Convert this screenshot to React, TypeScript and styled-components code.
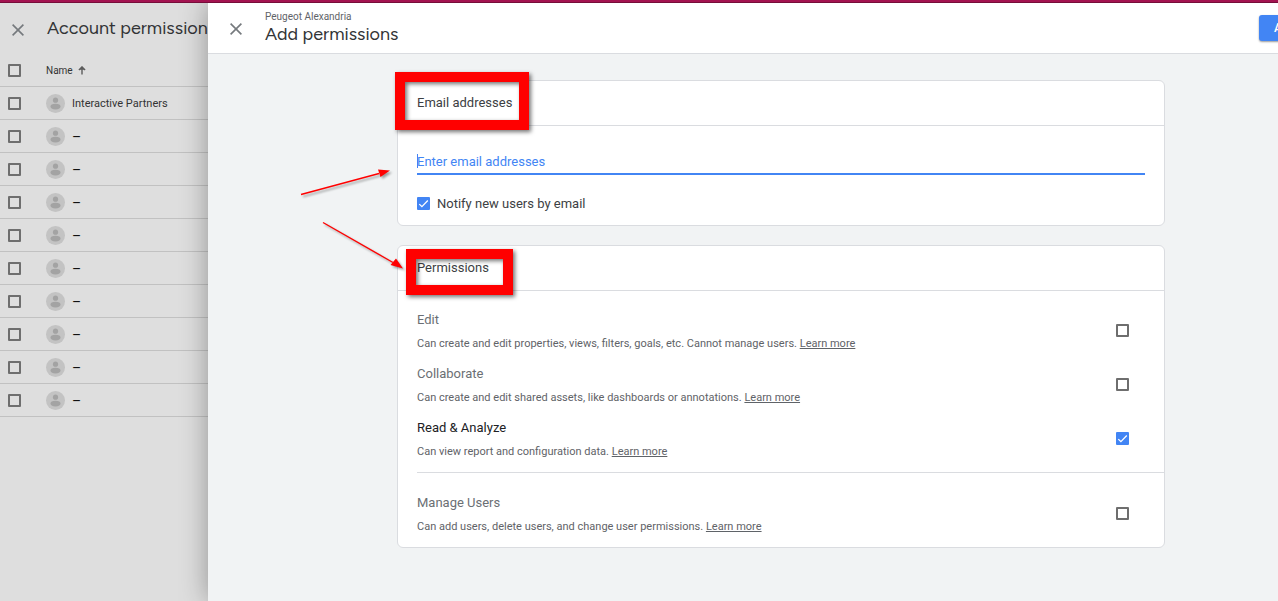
import React, { useId, useState } from "react";
import styled, { createGlobalStyle } from "styled-components";

const GlobalStyle = createGlobalStyle`
  *, *::before, *::after { box-sizing: border-box; }
  body {
    margin: 0;
    font-family: Roboto, "Liberation Sans", sans-serif;
    font-size: 13px;
    color: #3c4043;
    background: #dedede;
  }
  button, input { font: inherit; }
`;

const Page = styled.div`
  display: flex;
  flex-direction: column;
  min-height: 100vh;
  overflow: hidden;
`;

const BrandBar = styled.div`
  height: 3px;
  flex: none;
  background: #a31350;
  border-bottom: 1px solid #760d3a;
`;

const Columns = styled.div`
  display: flex;
  flex: 1;
`;

const Sidebar = styled.aside`
  flex: 0 0 208px;
  overflow: hidden;
  background: #dedede;
`;

const SidebarHeader = styled.header`
  display: flex;
  align-items: center;
  gap: 23px;
  height: 51px;
  padding-left: 12px;
`;

const Title = styled.h1`
  margin: 0;
  padding-bottom: 2px;
  font-family: Figtree, Lato, sans-serif;
  font-size: 18px;
  font-weight: 400;
  line-height: 20px;
  white-space: nowrap;
  color: #323436;
`;

const IconButton = styled.button`
  display: flex;
  flex: none;
  padding: 2px 0 0;
  border: 0;
  background: none;
  color: #75797d;
  cursor: pointer;
`;

const UserTable = styled.table`
  width: 100%;
  table-layout: fixed;
  border-collapse: separate;
  border-spacing: 0;

  th, td {
    height: 33px;
    padding: 0;
    border-bottom: 1px solid #c1c1c1;
    text-align: left;
    font-weight: 400;
  }
`;

const TickHead = styled.th`
  width: 46px;
`;

const TickPad = styled.div`
  padding-left: 8px;
`;

const SortButton = styled.button`
  display: flex;
  align-items: center;
  gap: 5px;
  padding: 1px 0 0;
  border: 0;
  background: none;
  font-size: 10px;
  line-height: 16px;
  color: #333;
  cursor: pointer;
`;

const UserCell = styled.div`
  display: flex;
  align-items: center;
  gap: 7px;
  font-size: 11px;
  line-height: 18px;
  white-space: nowrap;
  color: #333;
`;

const UserName = styled.span<{ $blank: boolean }>`
  padding-top: 1px;
  font-size: ${(p) => (p.$blank ? 14 : 11)}px;
  color: ${(p) => (p.$blank ? "#111" : "#333")};
`;

const Panel = styled.section`
  position: relative;
  display: flex;
  flex: 1;
  flex-direction: column;
  min-width: 0;
  background: #f1f3f4;
  box-shadow: 0 0 26px rgba(0, 0, 0, 0.34);
  clip-path: inset(0 0 0 -30px);
`;

const PanelHeader = styled.header`
  display: grid;
  grid-template-columns: 12px 1fr 19px;
  column-gap: 23px;
  align-items: center;
  height: 51px;
  padding-left: 22px;
  border-bottom: 1px solid #dadce0;
  background: #fff;
`;

const Heading = styled.div`
  display: flex;
  flex-direction: column;
`;

const AccountName = styled.p`
  margin: 0;
  font-size: 10px;
  line-height: 14px;
  color: #5f6368;
`;

const AddButton = styled.button`
  width: 60px;
  height: 26px;
  padding: 0 15px;
  border: 0;
  border-radius: 3px;
  background: #4285f4;
  box-shadow: 0 1px 2px rgba(0, 0, 0, 0.4);
  color: #fff;
  font-size: 12px;
  font-weight: 500;
  text-align: left;
  cursor: pointer;
`;

const PanelBody = styled.main`
  position: relative;
  display: flex;
  flex: 1;
  flex-direction: column;
  gap: 19px;
  padding: 26px 113px 26px 189px;
`;

const Card = styled.section`
  position: relative;
  border: 1px solid #dadce0;
  border-radius: 6px;
  background: #fff;
`;

const CardTitle = styled.h2`
  margin: 0;
  padding: 12px 19px;
  border-bottom: 1px solid #dadce0;
  font-size: 13px;
  font-weight: 400;
  line-height: 20px;
  color: #3c4043;
`;

const EmailBody = styled.div`
  display: flex;
  flex-direction: column;
  gap: 18px;
  padding: 24px 19px 11px;
`;

const EmailField = styled.div`
  display: flex;
  align-items: center;
  padding-bottom: 1px;
  border-bottom: 2px solid #4285f4;

  &::before {
    content: "";
    width: 1px;
    height: 14px;
    margin-right: -1px;
    background: #4285f4;
  }
`;

const EmailInput = styled.input`
  flex: 1;
  min-width: 0;
  height: 22px;
  padding: 0;
  border: 0;
  outline: 0;
  background: none;
  color: #3c4043;

  &::placeholder {
    color: #4285f4;
    opacity: 1;
  }
`;

const NotifyRow = styled.div`
  display: flex;
  align-items: center;
  gap: 7px;
  line-height: 21px;
`;

const TickFrame = styled.span`
  display: grid;
  flex: none;
  width: 13px;
  height: 13px;
`;

const TickInput = styled.input`
  grid-area: 1 / 1;
  width: 13px;
  height: 13px;
  margin: 0;
  appearance: none;
  border: 2px solid #6e6e6e;
  border-radius: 1px;
  cursor: pointer;

  &:checked {
    border: 0;
    background: #4285f4;
  }
`;

const TickMark = styled.svg`
  grid-area: 1 / 1;
  pointer-events: none;
`;

const PermissionList = styled.div`
  padding: 12px 0 7px;
`;

const PermissionRow = styled.div`
  display: flex;
  align-items: center;
  justify-content: space-between;
  min-height: 54px;
  padding: 0 35px 0 19px;
`;

const PermissionText = styled.div`
  padding-top: 4px;
`;

const Separator = styled.hr`
  margin: 7px 0 13px 19px;
  border: 0;
  border-top: 1px solid #dadce0;
`;

const PermissionName = styled.label<{ $on: boolean }>`
  display: block;
  line-height: 24px;
  color: ${(p) => (p.$on ? "#202124" : "#6b6f74")};
`;

const PermissionNote = styled.p`
  margin: 0;
  font-size: 11px;
  line-height: 24px;
  color: #5f6368;
`;

const LearnMore = styled.a`
  color: inherit;
  text-underline-offset: 1px;
`;

const Highlight = styled.div<{ $top: number; $left: number; $width: number; $height: number }>`
  position: absolute;
  top: ${(p) => p.$top}px;
  left: ${(p) => p.$left}px;
  width: ${(p) => p.$width}px;
  height: ${(p) => p.$height}px;
  border: 10px solid #f00;
  filter: drop-shadow(2px 2px 2px rgba(0, 0, 0, 0.55));
  pointer-events: none;
`;

const Arrows = styled.svg`
  position: absolute;
  top: 0;
  left: 0;
  overflow: visible;
  filter: drop-shadow(2px 2px 1px rgba(0, 0, 0, 0.35));
  pointer-events: none;
`;

function CloseIcon() {
  return (
    <svg width="12" height="12" viewBox="0 0 12 12" fill="none" stroke="currentColor" strokeWidth="1.6">
      <path d="M0.6 0.6 11.4 11.4M11.4 0.6 0.6 11.4" />
    </svg>
  );
}

function Avatar() {
  return (
    <svg width="19" height="19" viewBox="0 0 19 19">
      <circle cx="9.5" cy="9.5" r="9.5" fill="#c3c3c3" />
      <circle cx="9.5" cy="6.2" r="2.6" fill="#a3a3a3" />
      <ellipse cx="9.5" cy="12.6" rx="5" ry="2.8" fill="#a3a3a3" />
    </svg>
  );
}

type TickProps = { checked?: boolean; onToggle?: () => void; id?: string; label?: string };

function Tick({ checked = false, onToggle = () => {}, id, label }: TickProps) {
  return (
    <TickFrame>
      <TickInput type="checkbox" id={id} aria-label={label} checked={checked} onChange={onToggle} />
      {checked && (
        <TickMark width="13" height="13" viewBox="0 0 13 13" fill="none" stroke="#fff" strokeWidth="1.3">
          <path d="M2.3 7.1 4.9 9.6 10.8 3.5" />
        </TickMark>
      )}
    </TickFrame>
  );
}

const users = ["Interactive Partners", "–", "–", "–", "–", "–", "–", "–", "–", "–"];

const permissions = [
  { name: "Edit", note: "Can create and edit properties, views, filters, goals, etc. Cannot manage users." },
  { name: "Collaborate", note: "Can create and edit shared assets, like dashboards or annotations." },
  { name: "Read & Analyze", note: "Can view report and configuration data." },
  { name: "Manage Users", note: "Can add users, delete users, and change user permissions." },
];

function Permission({ name, note, initial }: { name: string; note: string; initial: boolean }) {
  const id = useId();
  const [on, setOn] = useState(initial);
  return (
    <PermissionRow>
      <PermissionText>
        <PermissionName htmlFor={id} $on={on}>{name}</PermissionName>
        <PermissionNote>
          {note} <LearnMore href="#">Learn more</LearnMore>
        </PermissionNote>
      </PermissionText>
      <Tick id={id} checked={on} onToggle={() => setOn(!on)} />
    </PermissionRow>
  );
}

export default function App() {
  const [notify, setNotify] = useState(true);
  const [selected, setSelected] = useState<number[]>([]);
  const toggle = (i: number) =>
    setSelected((s) => (s.includes(i) ? s.filter((n) => n !== i) : [...s, i]));

  return (
    <Page>
      <GlobalStyle />
      <BrandBar />
      <Columns>
        <Sidebar>
          <SidebarHeader>
            <IconButton aria-label="Close account permissions"><CloseIcon /></IconButton>
            <Title>Account permissions</Title>
          </SidebarHeader>
          <UserTable>
            <thead>
              <tr>
                <TickHead>
                  <TickPad>
                    <Tick
                      label="Select all"
                      checked={selected.length === users.length}
                      onToggle={() => setSelected(selected.length === users.length ? [] : users.map((_, i) => i))}
                    />
                  </TickPad>
                </TickHead>
                <th>
                  <SortButton>
                    Name
                    <svg width="8" height="9" viewBox="0 0 8 9" fill="none" stroke="#5c5c5c" strokeWidth="1.4">
                      <path d="M4 8.500V1M0.9 3.900 4 0.9 7.100 3.900" />
                      <path d="M1.500 3.800 4 1.200 6.500 3.800Z" fill="#5c5c5c" stroke="none" />
                    </svg>
                  </SortButton>
                </th>
              </tr>
            </thead>
            <tbody>
              {users.map((user, i) => (
                <tr key={i}>
                  <td>
                    <TickPad>
                      <Tick label={`Select user ${i + 1}`} checked={selected.includes(i)} onToggle={() => toggle(i)} />
                    </TickPad>
                  </td>
                  <td>
                    <UserCell>
                      <Avatar />
                      <UserName $blank={user === "–"}>{user}</UserName>
                    </UserCell>
                  </td>
                </tr>
              ))}
            </tbody>
          </UserTable>
        </Sidebar>

        <Panel>
          <PanelHeader>
            <IconButton aria-label="Close add permissions"><CloseIcon /></IconButton>
            <Heading>
              <AccountName>Peugeot Alexandria</AccountName>
              <Title>Add permissions</Title>
            </Heading>
            <AddButton>Add</AddButton>
          </PanelHeader>

          <PanelBody>
            <Card>
              <CardTitle>Email addresses</CardTitle>
              <EmailBody>
                <EmailField>
                  <EmailInput type="email" aria-label="Email addresses" placeholder="Enter email addresses" />
                </EmailField>
                <NotifyRow>
                  <Tick id="notify" checked={notify} onToggle={() => setNotify(!notify)} />
                  <label htmlFor="notify">Notify new users by email</label>
                </NotifyRow>
              </EmailBody>
              <Highlight $top={-9} $left={-3} $width={134} $height={58} />
            </Card>

            <Card>
              <CardTitle>Permissions</CardTitle>
              <PermissionList>
                {permissions.map((p) => (
                  <React.Fragment key={p.name}>
                    {p.name === "Manage Users" && <Separator />}
                    <Permission name={p.name} note={p.note} initial={p.name === "Read & Analyze"} />
                  </React.Fragment>
                ))}
              </PermissionList>
              <Highlight $top={3} $left={8} $width={107} $height={46} />
            </Card>

            <Arrows width="200" height="230" viewBox="0 0 200 230" fill="#f00" stroke="#f00">
              <path d="M93 140.500 171 119.500M115 168.500 185 208.500" strokeWidth="1.4" fill="none" />
              <path d="M182 116.500 170 115.500 172.500 123ZM195 214.500 188 204.500 182.500 211Z" stroke="none" />
            </Arrows>
          </PanelBody>
        </Panel>
      </Columns>
    </Page>
  );
}
